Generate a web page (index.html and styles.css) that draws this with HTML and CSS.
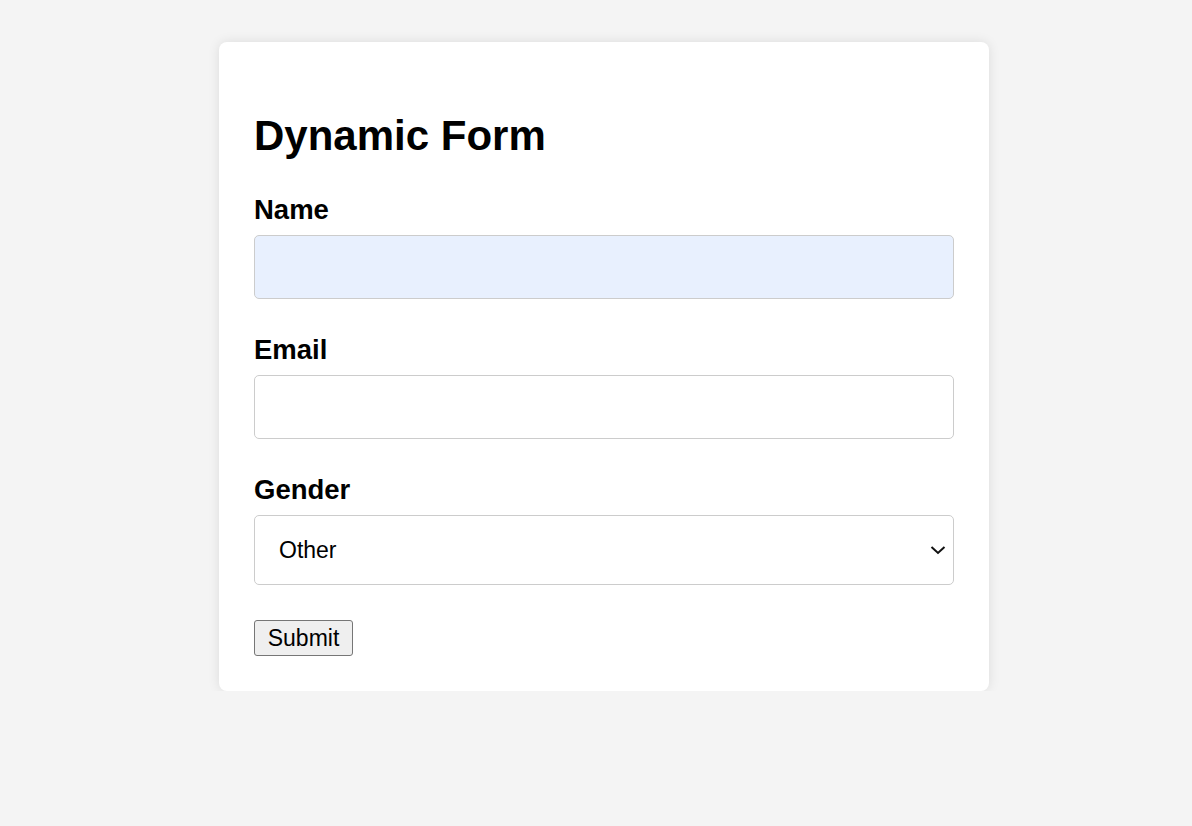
FILE: index.html
```html
<!DOCTYPE html>
<html lang="en">
<head>
<meta charset="utf-8">
<title>Dynamic Form</title>
<link rel="stylesheet" href="styles.css">
</head>
<body>
<div class="page">
  <div class="card">
    <h1 class="title">Dynamic Form</h1>
    <form class="form">
      <div class="group">
        <label class="label" for="name">Name</label>
        <input class="field field-filled" id="name" type="text">
      </div>
      <div class="group">
        <label class="label" for="email">Email</label>
        <input class="field" id="email" type="email">
      </div>
      <div class="group">
        <label class="label" for="gender">Gender</label>
        <div class="select-wrap">
          <select class="field select" id="gender">
            <option>Male</option>
            <option>Female</option>
            <option selected>Other</option>
          </select>
          <svg class="chevron" width="16" height="10" viewBox="0 0 16 10"><path d="M1.5 2 L8 8 L14.5 2" fill="none" stroke="#111" stroke-width="2"/></svg>
        </div>
      </div>
      <button class="submit" type="button">Submit</button>
    </form>
  </div>
</div>
</body>
</html>
```

FILE: styles.css
```css
html, body {
  margin: 0;
  padding: 0;
  background: #f4f4f4;
  font-family: "Liberation Sans", Arial, sans-serif;
}
.page {
  padding: 42px 0 0 219px;
}
.card {
  width: 700px;
  padding: 35px;
  background: #fff;
  border-radius: 8px;
  box-shadow: 0 0 12px rgba(0, 0, 0, 0.1);
}
.title {
  font-size: 42px;
  font-weight: bold;
  margin: 35px 0 34px;
  line-height: 48px;
  color: #000;
}
.form {
  display: flex;
  flex-direction: column;
}
.group {
  display: flex;
  flex-direction: column;
  margin-bottom: 35px;
}
.label {
  font-size: 27.5px;
  font-weight: bold;
  line-height: 32px;
  margin-bottom: 9px;
  color: #000;
}
.field {
  box-sizing: border-box;
  width: 700px;
  height: 64px;
  border: 1px solid #ccc;
  border-radius: 5px;
  background: #fff;
  font-family: "Liberation Sans", Arial, sans-serif;
  font-size: 23px;
  padding: 0 24px;
  margin: 0;
  outline: none;
}
.field-filled {
  background: #e8f0fe;
}
.select-wrap {
  position: relative;
}
.select {
  height: 70px;
  appearance: none;
  -webkit-appearance: none;
  color: #000;
}
.chevron {
  position: absolute;
  right: 8px;
  top: 30px;
  pointer-events: none;
}
.submit {
  align-self: flex-start;
  box-sizing: border-box;
  width: 99px;
  height: 36px;
  padding: 0;
  font-family: "Liberation Sans", Arial, sans-serif;
  font-size: 23px;
  color: #000;
  background: #efefef;
  border: 1px solid #767676;
  border-radius: 3px;
}
```
